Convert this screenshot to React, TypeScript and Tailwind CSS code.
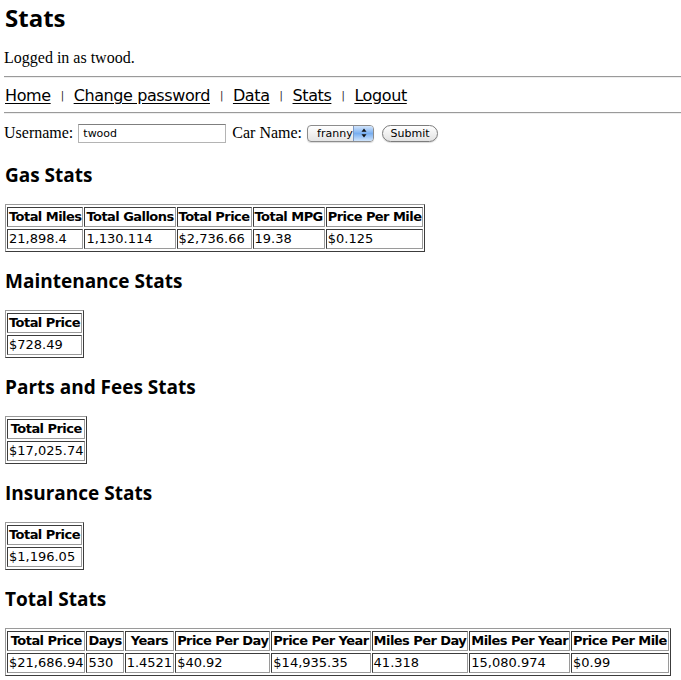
type Section = {
  title: string;
  headers: string[];
  values: string[];
};

const sections: Section[] = [
  {
    title: 'Gas Stats',
    headers: ['Total Miles', 'Total Gallons', 'Total Price', 'Total MPG', 'Price Per Mile'],
    values: ['21,898.4', '1,130.114', '$2,736.66', '19.38', '$0.125'],
  },
  { title: 'Maintenance Stats', headers: ['Total Price'], values: ['$728.49'] },
  { title: 'Parts and Fees Stats', headers: ['Total Price'], values: ['$17,025.74'] },
  { title: 'Insurance Stats', headers: ['Total Price'], values: ['$1,196.05'] },
  {
    title: 'Total Stats',
    headers: [
      'Total Price',
      'Days',
      'Years',
      'Price Per Day',
      'Price Per Year',
      'Miles Per Day',
      'Miles Per Year',
      'Price Per Mile',
    ],
    values: ['$21,686.94', '530', '1.4521', '$40.92', '$14,935.35', '41.318', '15,080.974', '$0.99'],
  },
];

const navLinks = ['Home', 'Change password', 'Data', 'Stats', 'Logout'];

function StatsTable({ headers, values }: { headers: string[]; values: string[] }) {
  return (
    <table className="ml-px mt-[17px] border-separate border-spacing-x-[1px] border-spacing-y-[2px] border border-[#9a9a9a] border-r-[#3c3c3c] border-b-[#3c3c3c] font-['DejaVu_Sans',sans-serif] text-[13px] leading-[16px] text-black">
      <tbody>
        <tr>
          {headers.map((h) => (
            <th
              key={h}
              className="whitespace-nowrap border border-[#3c3c3c] border-r-[#9a9a9a] border-b-[#9a9a9a] p-px text-center font-bold tracking-[-0.55px]"
            >
              {h}
            </th>
          ))}
        </tr>
        <tr>
          {values.map((v, i) => (
            <td
              key={i}
              className="whitespace-nowrap border border-[#3c3c3c] border-r-[#9a9a9a] border-b-[#9a9a9a] p-px text-left"
            >
              {v}
            </td>
          ))}
        </tr>
      </tbody>
    </table>
  );
}

function Rule({ className }: { className: string }) {
  return <div className={`h-[2px] border-y border-t-[#9a9a9a] border-b-[#eeeeee] ${className}`} />;
}

export default function App() {
  return (
    <div className="min-h-[680px] bg-white pl-[4px] pt-[4px] text-black">
      <h1 className="pl-px font-['Open_Sans',sans-serif] text-[24px] font-bold leading-[28px]">Stats</h1>

      <p className="mt-[17px] font-['Liberation_Serif',serif] text-[16px] leading-[18px]">Logged in as twood.</p>

      <Rule className="mt-[9px]" />

      <nav className="mt-[8px] flex h-[20px] items-baseline gap-[10px] overflow-hidden pl-px font-['DejaVu_Sans',sans-serif] text-[16px] leading-[20px] tracking-[-0.4px]">
        {navLinks.map((label, i) => (
          <div key={label} className="flex items-baseline gap-[10px]">
            {i > 0 && <span className="relative -top-[2px] text-[10px] leading-[10px] text-[#222]">|</span>}
            <a href="#" className="text-black underline underline-offset-[2px]">
              {label}
            </a>
          </div>
        ))}
      </nav>

      <Rule className="mt-[6px]" />

      <form className="mt-[9px] flex h-[20px] items-center font-['Liberation_Serif',serif] text-[16px] leading-[18px]">
        <span>Username:</span>
        <input
          readOnly
          value="twood"
          className="ml-[5px] h-[19px] w-[148px] border border-[#b4b4b4] border-t-[#7f7f7f] bg-white px-[4px] font-['DejaVu_Sans',sans-serif] text-[11px] outline-none"
        />
        <span className="ml-[6px]">Car Name:</span>
        <div className="ml-[5px] flex h-[17px] w-[67px] overflow-hidden rounded-[4px] border border-[#8c8c8c] bg-linear-to-b from-white to-[#e4e4e4] shadow-[0_1px_1px_rgba(0,0,0,0.15)]">
          <span className="flex-1 pl-[9px] font-['DejaVu_Sans',sans-serif] text-[11px] leading-[15px]">franny</span>
          <span className="flex w-[20px] items-center justify-center border-l border-[#7d99c4] bg-linear-to-b from-[#d3e5fb] via-[#78aef0] to-[#cfe4fb]">
            <svg width="6" height="10" viewBox="0 0 6 10">
              <path d="M3 0.5 L5.5 3.8 L0.5 3.8 Z" fill="#111" />
              <path d="M3 9.5 L5.5 6.2 L0.5 6.2 Z" fill="#111" />
            </svg>
          </span>
        </div>
        <button
          type="button"
          className="ml-[8px] flex h-[17px] w-[56px] items-center justify-center rounded-full border border-[#7c7c7c] bg-linear-to-b from-white to-[#e2e2e2] font-['DejaVu_Sans',sans-serif] text-[11px] leading-[13px] shadow-[0_1px_1px_rgba(0,0,0,0.15)]"
        >
          Submit
        </button>
      </form>

      <div className="mt-[20px] flex flex-col items-start">
        {sections.map((s, i) => (
          <section key={s.title} className={i > 0 ? 'mt-[17px]' : ''}>
            <h2 className="pl-px font-['Open_Sans',sans-serif] text-[19px] font-bold leading-[24px]">{s.title}</h2>
            <StatsTable headers={s.headers} values={s.values} />
          </section>
        ))}
      </div>
    </div>
  );
}
